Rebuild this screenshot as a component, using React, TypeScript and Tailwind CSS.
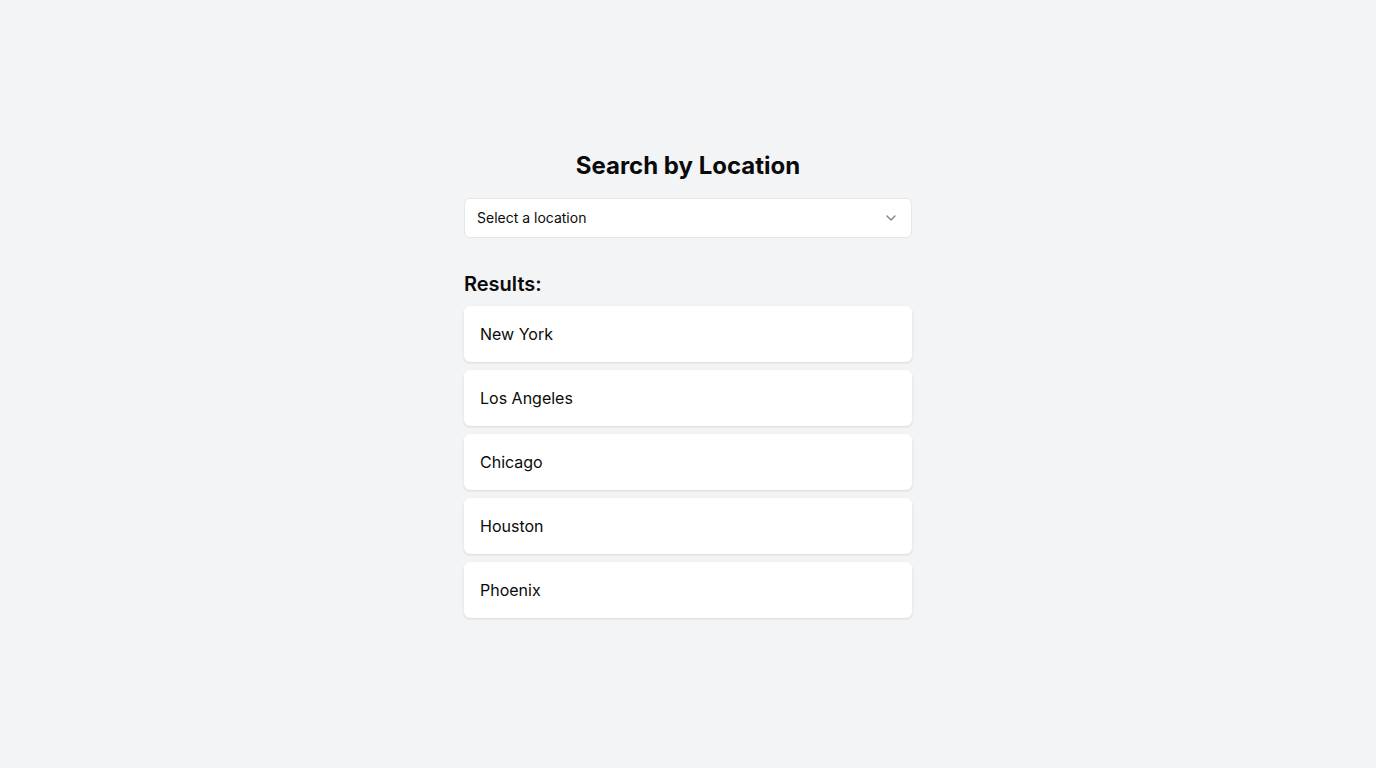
import React from 'react';
import { ChevronDown } from 'lucide-react';

const LOCATIONS = ['New York', 'Los Angeles', 'Chicago', 'Houston', 'Phoenix'];

export default function App() {
  return (
    <div className="min-h-screen bg-gray-100 flex items-center justify-center font-['Inter',sans-serif] text-[#0a0a0a]">
      <div className="w-full max-w-md">
        <h1 className="text-2xl font-bold text-center mb-4">Search by Location</h1>

        {/* Select trigger */}
        <button className="w-full h-10 flex items-center justify-between px-3 bg-white border border-gray-200 rounded-md text-sm text-left">
          <span>Select a location</span>
          <ChevronDown size={16} className="opacity-50" />
        </button>

        <div className="mt-8">
          <h2 className="text-xl font-semibold mb-2">Results:</h2>
          <div className="space-y-2">
            {LOCATIONS.map((loc) => (
              <div key={loc} className="bg-white rounded-md shadow-sm p-4 text-base">
                {loc}
              </div>
            ))}
          </div>
        </div>
      </div>
    </div>
  );
}
